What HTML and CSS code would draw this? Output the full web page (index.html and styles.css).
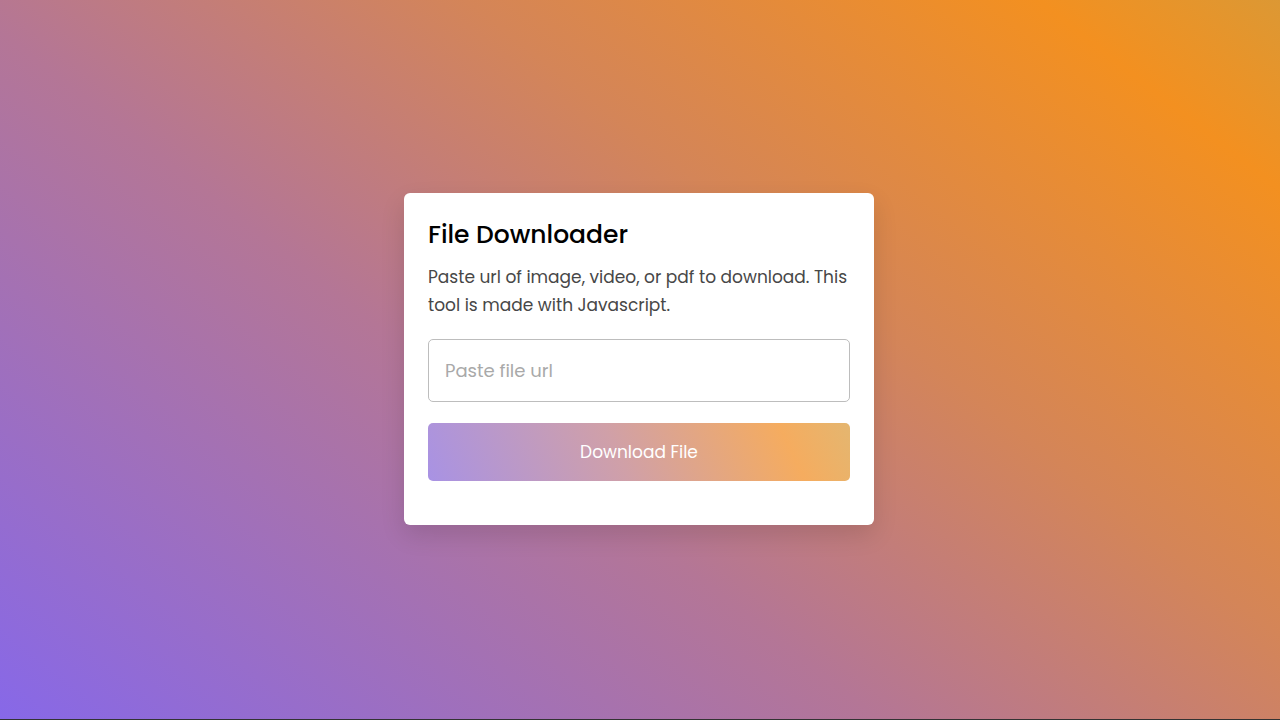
FILE: index.html
```html
<!DOCTYPE html>
<html lang="en">
<head>
<meta charset="utf-8">
<title>File Downloader</title>
<link rel="stylesheet" href="styles.css">
</head>
<body>
<main class="page">
  <div class="wrapper">
    <h1 class="title">File Downloader</h1>
    <p class="desc">Paste url of image, video, or pdf to download. This tool is made with Javascript.</p>
    <form class="form" onsubmit="return false">
      <input class="url-input" type="url" placeholder="Paste file url">
      <button class="btn" type="submit">Download File</button>
    </form>
  </div>
</main>
<div class="edge"></div>
</body>
</html>
```
FILE: styles.css
```css
* { box-sizing: border-box; margin: 0; padding: 0; }
html, body { height: 100%; }
body {
  display: flex;
  flex-direction: column;
  font-family: "Poppins", "Open Sans", "Noto Sans", sans-serif;
  background: #2e2e2e;
}
.page {
  flex: 1;
  display: flex;
  align-items: center;
  justify-content: center;
  background: linear-gradient(38deg,
    rgb(135, 104, 232) 0%,
    rgb(180, 118, 150) 40%,
    rgb(212, 133, 88) 63%,
    rgb(243, 144, 32) 89%,
    rgb(220, 152, 52) 100%);
}
.edge { height: 1px; background: #333; }
.wrapper {
  width: 470px;
  background: #fff;
  border-radius: 6px;
  padding: 24px 24px 44px;
  box-shadow: 0 10px 25px rgba(0, 0, 0, 0.12);
  margin-bottom: 1px;
  margin-right: 2px;
}
.title {
  font-size: 25px;
  font-weight: 500;
  color: #000;
  line-height: 36px;
}
.desc {
  margin-top: 10px;
  font-size: 17px;
  line-height: 28px;
  color: #474747;
}
.form { margin-top: 20px; display: flex; flex-direction: column; gap: 21px; }
.url-input {
  height: 63px;
  width: 100%;
  border: 1px solid #bdbdbd;
  border-radius: 5px;
  padding: 0 16px;
  font-family: inherit;
  font-size: 18px;
  color: #333;
  outline: none;
}
.url-input::placeholder { color: #a9a9a9; }
.btn {
  height: 58px;
  width: 100%;
  border: none;
  border-radius: 5px;
  font-family: inherit;
  font-size: 17px;
  color: #fff;
  background: linear-gradient(65deg,
    rgb(168, 146, 228) 0%,
    rgb(208, 160, 168) 45%,
    rgb(245, 172, 95) 84%,
    rgb(228, 182, 112) 100%);
  cursor: pointer;
}
```
